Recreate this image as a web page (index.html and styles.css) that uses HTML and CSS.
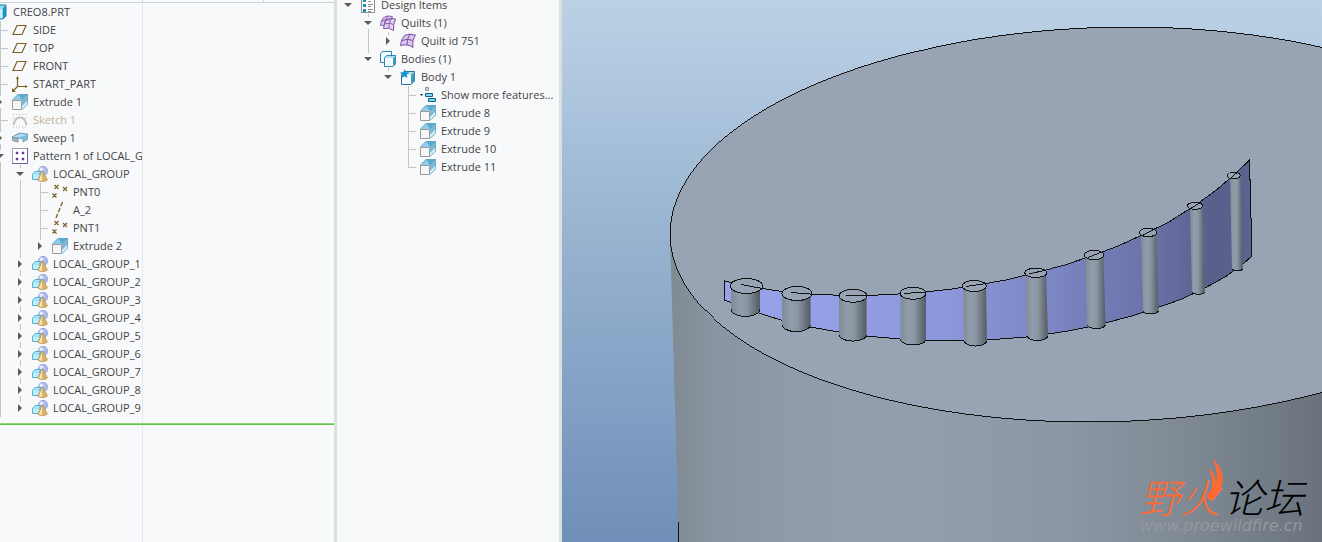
FILE: index.html
```html
<!DOCTYPE html>
<html lang="en">

<head>
    <meta charset="UTF-8">
    <meta name="viewport" content="width=device-width, initial-scale=1.0">
    <title>CREO8.PRT</title>
    <link rel="stylesheet" href="styles.css">
</head>

<body>

    <!-- Icons -->
    <svg class="sprite" aria-hidden="true">
        <symbol id="i-part" viewBox="0 0 16 16">
            <path d="M1 4L4 1H14V12L11 15H1Z" fill="#8fdcf5" stroke="#1f7fae" />
            <path d="M11 4V15L14 12V1Z" fill="#1f8fc0" />
            <path d="M2 5h8v9H2z" fill="#c9f1fc" />
        </symbol>
        <symbol id="i-plane" viewBox="0 0 16 16">
            <path d="M5 3.500H14L10 12.500H1Z" fill="none" stroke="#7d6129" stroke-width="1.2" />
        </symbol>
        <symbol id="i-csys" viewBox="0 0 16 16">
            <path d="M5.500 1V10.500H15M5.500 10.500L1 15" fill="none" stroke="#7d6129" stroke-width="1.2" />
            <path d="M4 3L5.500 0L7 3ZM13 9L16 10.500L13 12ZM0 12V16H4Z" fill="#7d6129" />
        </symbol>
        <symbol id="i-extrude" viewBox="0 0 16 16">
            <path d="M0 6L6 0H16L10 6Z" fill="#8fcde8" />
            <path d="M6 0H16L10 6Z" fill="#58abd3" />
            <path d="M10 6L16 0V10L10 16Z" fill="#7cbad6" />
            <path d="M10 16L16 10V6L10 12Z" fill="#d8f0f8" />
            <path d="M0.500 6L6 0.500H15.500V10L10 15.500M10 6L15.500 0.500" fill="none" stroke="#6aa3bd" stroke-width="0.8" />
            <path d="M0.500 6.500H9.500V15.500H0.500Z" fill="#f7f7f7" stroke="#9b9b9b" />
        </symbol>
        <symbol id="i-sketch" viewBox="0 0 16 16">
            <path d="M1.500 13C3.500 3 12.500 3 14.500 13" fill="none" stroke="#c4c2bd" stroke-width="2" />
            <path d="M1 2.500H16M1 15H16M1 6h2M13 6h2" fill="none" stroke="#b4b4b4" stroke-dasharray="1 2" />
        </symbol>
        <symbol id="i-sweep" viewBox="0 0 16 16">
            <path d="M0 7L7 3L16 4V9L11 12V9L7 8L0 10Z" fill="#79bddb" stroke="#6d9cb0" stroke-width="0.8" />
            <path d="M1 7L8 4L15 5L8 7Z" fill="#b9e0ef" />
            <path d="M0.500 7.500L6 8.500V12L0.500 10.500Z" fill="#a8b9c0" stroke="#8b9599" />
        </symbol>
        <symbol id="i-pattern" viewBox="0 0 16 16">
            <path d="M0.500 0.500H15.500V15.500H0.500Z" fill="#fff" stroke="#a99aba" />
            <path d="M15.500 0V15.500H0" fill="none" stroke="#7a5a9c" />
            <path d="M4 4h2v2H4zM10 4h2v2h-2zM4 10h2v2H4zM10 10h2v2h-2z" fill="#6a3f9a" stroke="#6a3f9a" stroke-width="0.5" />
        </symbol>
        <symbol id="i-group" viewBox="0 0 16 16">
            <circle cx="11" cy="5" r="4.700" fill="#a9b9ee" stroke="#8090cc" stroke-width="0.6" />
            <circle cx="9.500" cy="3.500" r="2" fill="#e6ebff" />
            <path d="M0.500 8.500L3 5.500H9L7 8.500V13.500H0.500Z" fill="#a5e6fa" stroke="#3a9fc8" stroke-width="0.8" />
            <path d="M1 9H7V13H1Z" fill="#bceffd" />
            <path d="M10.500 4.500L15.500 14Q10.500 17.500 5.500 14Z" fill="#d9b266" stroke="#a98848" stroke-width="0.6" />
            <path d="M10 6L7 14Q9 15 10 15Z" fill="#f8e2b4" />
        </symbol>
        <symbol id="i-points" viewBox="0 0 16 16">
            <path d="M2.500 1l4 4m0-4l-4 4M11 3l4 4m0-4l-4 4M0.500 9.500l4 4m0-4l-4 4" fill="none" stroke="#80632a" stroke-width="1.3" />
        </symbol>
        <symbol id="i-axis" viewBox="0 0 16 16">
            <path d="M10.500 0L4 16" fill="none" stroke="#80632a" stroke-width="1.4" stroke-dasharray="4.500 2" />
        </symbol>
        <symbol id="i-design" viewBox="0 0 16 16">
            <path d="M1.500 0.500H14.500V15.500H1.500Z" fill="#fff" stroke="#8c8c8c" />
            <path d="M3 2h3v3H3zM3 7h3v3H3zM3 12h3v3H3z" fill="#1f8fc0" />
            <path d="M8 2.500h5M8 4.500h3M8 7.500h5M8 9.500h3M8 12.500h5M8 14.500h3" stroke="#8c8c8c" />
        </symbol>
        <symbol id="i-quilt" viewBox="0 0 16 16">
            <path d="M4.500 2.500Q9 0 15.500 2Q12 7 13 14.500Q8 10.500 0.500 12.500Q1 6 4.500 2.500Z" fill="#dcc8ee" stroke="#7c4fa3" />
            <path d="M10 1Q6.500 6 7 12M2 7.500Q7 5 13 7.500" fill="none" stroke="#7c4fa3" />
        </symbol>
        <symbol id="i-quilts" viewBox="0 0 16 16">
            <path d="M3.500 2.500Q7 0 12.500 1.500Q9.500 6 10 11.500Q6 9 0.500 10.500Q1 5 3.500 2.500Z" fill="#dcc8ee" stroke="#8e63b3" />
            <path d="M7 4.500Q10.500 2.500 15.500 4Q13 9 13.500 15.500Q9 12 3.500 13.500Q4 7 7 4.500Z" fill="#e3d3f2" stroke="#7c4fa3" />
            <path d="M11.500 3.500Q8.500 8 8.800 13M5 9Q9 7 13.500 9.500M8 1Q5 4 4.500 9M1.500 6Q5 4 10 5" fill="none" stroke="#7c4fa3" stroke-width="0.9" />
        </symbol>
        <symbol id="i-bodies" viewBox="0 0 16 16">
            <path d="M0.500 2.500L3 0.500H11.500V9L9.500 11.500H0.500Z" fill="#f4fcff" stroke="#2c86ad" />
            <path d="M4.500 6.500L7 4.500H15.500V13L13 15.500H4.500Z" fill="#f7fdff" stroke="#2c86ad" />
            <path d="M13 7L15.500 4.500V13L13 15.500Z" fill="#3f9cc2" />
            <path d="M5 6.500L7 5H15L13 7H5Z" fill="#a5e0f5" />
        </symbol>
        <symbol id="i-body" viewBox="0 0 16 16">
            <path d="M1.500 5.500L5 2.500H14.500V12L11 15.500H1.500Z" fill="#f7fdff" stroke="#2c6f93" />
            <path d="M11 5.500L14.500 2.500V12L11 15.500Z" fill="#3f9cc2" />
            <path d="M2 5.500L5 3H14L11 5.500Z" fill="#a5e0f5" />
            <path d="M4.500 0L5.800 3.300L9.300 3.500L6.600 5.700L7.500 9L4.500 7.200L1.500 9L2.400 5.700L0 3.500L3.200 3.300Z" fill="#1590cf" />
        </symbol>
        <symbol id="i-more" viewBox="0 0 16 16">
            <path d="M5.500 0.500h3v3h-3z" fill="#cfcfcf" stroke="#999" />
            <path d="M0 7h3L1.500 9Z" fill="#222" />
            <path d="M5.500 6.500h7v3h-7zM8.500 11.500h7v3h-7z" fill="#7fd6f5" stroke="#0f6288" />
        </symbol>
    </svg>

    <main class="workspace">

        <!-- Model tree -->
        <section class="panel model-panel" aria-label="Model tree">
            <div class="column-heads"><span></span><span></span><span></span></div>
            <div class="name-column">
                <ul class="tree model-tree">
                    <li>
                        <div class="row"><span class="twisty"></span><svg class="icon"><use href="#i-part" /></svg>CREO8.PRT</div>
                        <ul class="trunk">
                            <li class="leaf"><div class="row"><span class="twisty"></span><svg class="icon"><use href="#i-plane" /></svg>SIDE</div></li>
                            <li class="leaf"><div class="row"><span class="twisty"></span><svg class="icon"><use href="#i-plane" /></svg>TOP</div></li>
                            <li class="leaf"><div class="row"><span class="twisty"></span><svg class="icon"><use href="#i-plane" /></svg>FRONT</div></li>
                            <li class="leaf"><div class="row"><span class="twisty"></span><svg class="icon"><use href="#i-csys" /></svg>START_PART</div></li>
                            <li><div class="row"><button class="twisty closed" aria-label="Expand"></button><svg class="icon"><use href="#i-extrude" /></svg>Extrude 1</div></li>
                            <li class="leaf"><div class="row suppressed"><span class="twisty"></span><svg class="icon"><use href="#i-sketch" /></svg>Sketch 1</div></li>
                            <li><div class="row"><button class="twisty closed" aria-label="Expand"></button><svg class="icon"><use href="#i-sweep" /></svg>Sweep 1</div></li>
                            <li>
                                <div class="row"><button class="twisty open" aria-label="Collapse"></button><svg class="icon"><use href="#i-pattern" /></svg>Pattern 1 of LOCAL_G</div>
                                <ul>
                                    <li>
                                        <div class="row"><button class="twisty open" aria-label="Collapse"></button><svg class="icon"><use href="#i-group" /></svg>LOCAL_GROUP</div>
                                        <ul>
                                            <li class="leaf"><div class="row"><span class="twisty"></span><svg class="icon"><use href="#i-points" /></svg>PNT0</div></li>
                                            <li class="leaf"><div class="row"><span class="twisty"></span><svg class="icon"><use href="#i-axis" /></svg>A_2</div></li>
                                            <li class="leaf"><div class="row"><span class="twisty"></span><svg class="icon"><use href="#i-points" /></svg>PNT1</div></li>
                                            <li><div class="row"><button class="twisty closed" aria-label="Expand"></button><svg class="icon"><use href="#i-extrude" /></svg>Extrude 2</div></li>
                                        </ul>
                                    </li>
                                    <li><div class="row"><button class="twisty closed" aria-label="Expand"></button><svg class="icon"><use href="#i-group" /></svg>LOCAL_GROUP_1</div></li>
                                    <li><div class="row"><button class="twisty closed" aria-label="Expand"></button><svg class="icon"><use href="#i-group" /></svg>LOCAL_GROUP_2</div></li>
                                    <li><div class="row"><button class="twisty closed" aria-label="Expand"></button><svg class="icon"><use href="#i-group" /></svg>LOCAL_GROUP_3</div></li>
                                    <li><div class="row"><button class="twisty closed" aria-label="Expand"></button><svg class="icon"><use href="#i-group" /></svg>LOCAL_GROUP_4</div></li>
                                    <li><div class="row"><button class="twisty closed" aria-label="Expand"></button><svg class="icon"><use href="#i-group" /></svg>LOCAL_GROUP_5</div></li>
                                    <li><div class="row"><button class="twisty closed" aria-label="Expand"></button><svg class="icon"><use href="#i-group" /></svg>LOCAL_GROUP_6</div></li>
                                    <li><div class="row"><button class="twisty closed" aria-label="Expand"></button><svg class="icon"><use href="#i-group" /></svg>LOCAL_GROUP_7</div></li>
                                    <li><div class="row"><button class="twisty closed" aria-label="Expand"></button><svg class="icon"><use href="#i-group" /></svg>LOCAL_GROUP_8</div></li>
                                    <li><div class="row"><button class="twisty closed" aria-label="Expand"></button><svg class="icon"><use href="#i-group" /></svg>LOCAL_GROUP_9</div></li>
                                </ul>
                            </li>
                        </ul>
                    </li>
                </ul>
            </div>
            <div class="insert-line"></div>
            <div class="name-column rest"></div>
        </section>

        <!-- Design tree -->
        <section class="panel design-panel" aria-label="Design items">
            <ul class="tree design-tree">
                <li>
                    <div class="row"><button class="twisty open" aria-label="Collapse"></button><svg class="icon"><use href="#i-design" /></svg>Design Items</div>
                    <ul>
                        <li>
                            <div class="row"><button class="twisty open" aria-label="Collapse"></button><svg class="icon"><use href="#i-quilts" /></svg>Quilts (1)</div>
                            <ul>
                                <li><div class="row"><button class="twisty closed" aria-label="Expand"></button><svg class="icon"><use href="#i-quilt" /></svg>Quilt id 751</div></li>
                            </ul>
                        </li>
                        <li>
                            <div class="row"><button class="twisty open" aria-label="Collapse"></button><svg class="icon"><use href="#i-bodies" /></svg>Bodies (1)</div>
                            <ul>
                                <li>
                                    <div class="row"><button class="twisty open" aria-label="Collapse"></button><svg class="icon"><use href="#i-body" /></svg>Body 1</div>
                                    <ul>
                                        <li class="leaf"><div class="row"><span class="twisty"></span><svg class="icon"><use href="#i-more" /></svg>Show more features...</div></li>
                                        <li class="leaf"><div class="row"><span class="twisty"></span><svg class="icon"><use href="#i-extrude" /></svg>Extrude 8</div></li>
                                        <li class="leaf"><div class="row"><span class="twisty"></span><svg class="icon"><use href="#i-extrude" /></svg>Extrude 9</div></li>
                                        <li class="leaf"><div class="row"><span class="twisty"></span><svg class="icon"><use href="#i-extrude" /></svg>Extrude 10</div></li>
                                        <li class="leaf"><div class="row"><span class="twisty"></span><svg class="icon"><use href="#i-extrude" /></svg>Extrude 11</div></li>
                                    </ul>
                                </li>
                            </ul>
                        </li>
                    </ul>
                </li>
            </ul>
        </section>

        <!-- 3D view -->
        <section class="viewport" aria-label="Graphics area">
            <svg class="scene" viewBox="562 0 760 542" preserveAspectRatio="xMinYMin slice">
                <defs>
                    <linearGradient id="side" gradientUnits="userSpaceOnUse" x1="670" y1="0" x2="1322" y2="0">
                        <stop offset="0" stop-color="#7f8a93" />
                        <stop offset="0.060" stop-color="#8894a0" />
                        <stop offset="0.200" stop-color="#909caa" />
                        <stop offset="0.380" stop-color="#929eac" />
                        <stop offset="0.600" stop-color="#8b97a3" />
                        <stop offset="0.800" stop-color="#7e8994" />
                        <stop offset="1" stop-color="#6a737d" />
                    </linearGradient>
                    <linearGradient id="sheet" gradientUnits="userSpaceOnUse" x1="725" y1="0" x2="1252" y2="0">
                        <stop offset="0" stop-color="#98a2ea" />
                        <stop offset="0.230" stop-color="#939ee5" />
                        <stop offset="0.420" stop-color="#8c97da" />
                        <stop offset="0.600" stop-color="#7e88c5" />
                        <stop offset="0.800" stop-color="#6b73a9" />
                        <stop offset="0.930" stop-color="#595f8b" />
                        <stop offset="1" stop-color="#5d638f" />
                    </linearGradient>
                    <linearGradient id="pin">
                        <stop offset="0" stop-color="#7f8a95" />
                        <stop offset="0.300" stop-color="#919dab" />
                        <stop offset="0.550" stop-color="#8a96a2" />
                        <stop offset="0.850" stop-color="#656e78" />
                        <stop offset="1" stop-color="#545c64" />
                    </linearGradient>
                </defs>

                <!-- Base cylinder -->
                <path d="M670 235L679 542H1322V225Z" fill="url(#side)" />
                <ellipse class="face" cx="1109" cy="224.500" rx="439.100" ry="197.200" transform="rotate(-1.550 1109 224.500)" />
                <path class="edge" d="M678.500 522V542" />

                <!-- Swept sheet -->
                <path fill="url(#sheet)" d="M724.500 281L746 285.500L763 288.600L782 291.500L810 294L840 295.300L868 295.500L895 294.200L925 292L950 289.300L974 285.500L1005 280.200L1035 272.800L1065 265L1094 255L1118 246L1140 236L1168 222.500L1195 205.500L1215 191L1234 175L1249.500 160L1252 256L1243 264L1225 277L1205 288L1182 299L1158 307.500L1132 316L1105 323L1088 327L1068 331L1048 334L1026 337L987 340L945 341L926 340.500L900 339L866 336L839 332L810 327L781 320L760 313.500L731 302.500L724.500 300Z" />
                <path class="edge" d="M724.500 300V281L746 285.500L763 288.600L782 291.500L810 294L840 295.300L868 295.500L895 294.200L925 292L950 289.300L974 285.500L1005 280.200L1035 272.800L1065 265L1094 255L1118 246L1140 236L1168 222.500L1195 205.500L1215 191L1234 175L1249.500 160L1252 256L1243 264L1225 277L1205 288L1182 299L1158 307.500L1132 316L1105 323L1088 327L1068 331L1048 334L1026 337L987 340L945 341L926 340.500L900 339L866 336L839 332L810 327L781 320L760 313.500L731 302.500Z" />

                <!-- Pins -->
                <g fill="url(#pin)">
                    <path d="M731 288V309A14.500 7.500 0 0 0 760 309V288Z" />
                    <path d="M782 295V324.500A14 7 0 0 0 810.500 324.500V295Z" />
                    <path d="M839 297V334.500A13.500 6.500 0 0 0 866.500 334.500V297Z" />
                    <path d="M900.500 295V340A13 6 0 0 0 926 340V295Z" />
                    <path d="M963 287L964 340.500A11.500 5.500 0 0 0 987 340.500L986 287Z" />
                    <path d="M1025.500 274L1027 335.500A10.500 5 0 0 0 1048 335.500L1046 274Z" />
                    <path d="M1085.500 257L1087 325A9.500 4.500 0 0 0 1105.500 325L1103.500 257Z" />
                    <path d="M1141 234L1143 311A8 4 0 0 0 1158.500 311L1156.500 234Z" />
                    <path d="M1190 207L1192 292A7 3.500 0 0 0 1205 292L1202.500 207Z" />
                    <path d="M1230 177L1232 269A6 3 0 0 0 1243 269L1240.500 177Z" />
                </g>
                <g class="edge">
                    <path d="M731 309A14.500 7.500 0 0 0 760 309" />
                    <path d="M782 324.500A14 7 0 0 0 810.500 324.500" />
                    <path d="M839 334.500A13.500 6.500 0 0 0 866.500 334.500" />
                    <path d="M900.500 340A13 6 0 0 0 926 340" />
                    <path d="M964 340.500A11.500 5.500 0 0 0 987 340.500" />
                    <path d="M1027 335.500A10.500 5 0 0 0 1048 335.500" />
                    <path d="M1087 325A9.500 4.500 0 0 0 1105.500 325" />
                    <path d="M1143 311A8 4 0 0 0 1158.500 311" />
                    <path d="M1192 292A7 3.500 0 0 0 1205 292" />
                    <path d="M1232 269A6 3 0 0 0 1243 269" />
                </g>
                <g class="face">
                    <ellipse cx="746.500" cy="286" rx="16.300" ry="7.500" />
                    <ellipse cx="797" cy="293.500" rx="15" ry="7" />
                    <ellipse cx="853" cy="295.800" rx="14" ry="6.500" />
                    <ellipse cx="913" cy="293.300" rx="13" ry="6" />
                    <ellipse cx="974.300" cy="286" rx="12" ry="5.500" />
                    <ellipse cx="1035.700" cy="272.800" rx="11" ry="4.700" />
                    <ellipse cx="1094" cy="255" rx="9.700" ry="4.700" />
                    <ellipse cx="1148" cy="232.500" rx="8.700" ry="4.200" />
                    <ellipse cx="1195" cy="205.800" rx="7.700" ry="3.500" />
                    <ellipse cx="1233.800" cy="175.500" rx="6.500" ry="3.200" />
                </g>
                <path class="edge" d="M741 284.500L763 288.600M791 292.500L812 294.200M846 295.500H867M904 293.500L926 292M966 286.500L986 283.500M1029 274L1046 270M1088 257.500L1103 251.500M1142 235.500L1156 228.500M1190 209L1201 202M1231 178L1238 171.500" />
            </svg>

            <!-- Forum mark -->
            <div class="watermark">
                <div class="brand" lang="zh-CN"><span class="fire">野火</span><span>论坛</span></div>
                <div class="site">www.proewildfire.cn</div>
                <svg class="flame" viewBox="0 0 20 44" aria-hidden="true">
                    <path d="M7 0C17 9 20 20 16 30C13 37 10 38 8 42C5 44 1 40 2 36C8 33 10 24 3 9C9 14 11 20 11 25C13 18 12 9 7 0Z" fill="#ff6a33" />
                </svg>
            </div>
        </section>

    </main>

</body>

</html>
```

FILE: styles.css
```css
/* General */
* {
    box-sizing: border-box;
}

body {
    margin: 0;
    font-family: "Open Sans", "Noto Sans", sans-serif;
    font-size: 11px;
    color: #444;
    background-color: #f8f9fb;
}

.sprite {
    display: none;
}

.workspace {
    display: flex;
    height: 100vh;
    overflow: hidden;
}

/* Panels */
.panel {
    flex: none;
    border-right: 3px solid #d9e0e0;
    background-color: #f8f9fb;
    overflow: hidden;
}

.model-panel {
    width: 337px;
    display: flex;
    flex-direction: column;
}

.design-panel {
    width: 225px;
}

.column-heads {
    display: grid;
    grid-template-columns: 143px 121px 1fr;
    height: 3px;
    border-bottom: 1px solid #d0d4d6;
}

.column-heads span {
    border-right: 1px solid #d0d4d6;
}

.column-heads span:last-child {
    border-right: none;
}

.name-column {
    width: 143px;
    padding-bottom: 6px;
    border-right: 1px solid #e6e9ec;
    overflow: hidden;
}

.rest {
    flex: 1;
}

.insert-line {
    height: 2px;
    background-color: #63c544;
    border-top: 1px solid #8fd67a;
}

/* Trees */
.tree,
.tree ul {
    list-style: none;
    margin: 0;
    padding: 0;
}

.tree ul {
    padding-left: 20px;
}

.model-tree {
    margin-left: -28px;
}

.design-tree {
    margin: -4px 0 0 3px;
}

/* The branch line runs behind the arrows */
.tree ul > li {
    background: linear-gradient(#c3c5c8, #c3c5c8) 8px 0 / 1px 100% no-repeat;
}

.tree ul > li:last-child {
    background-size: 1px 9px;
}

.tree .trunk > li:last-child {
    background-size: 1px 100%;
}

.row {
    display: flex;
    align-items: center;
    height: 18px;
    line-height: 16px;
    white-space: nowrap;
}

.suppressed {
    color: #bfb498;
}

.icon {
    flex: none;
    width: 16px;
    height: 16px;
    margin: 0 5px 0 4px;
}

.twisty {
    flex: none;
    display: flex;
    align-items: center;
    justify-content: center;
    width: 16px;
    height: 12px;
    padding: 0;
    border: none;
    background: none;
}

button.twisty {
    background-color: #f8f9fb;
    cursor: pointer;
}

.leaf .twisty {
    background: linear-gradient(#c3c5c8, #c3c5c8) 100% 50% / 8px 1px no-repeat;
}

.twisty.open::before {
    content: "";
    border: 4px solid transparent;
    border-top-color: #5c5c5c;
    border-bottom: none;
}

.twisty.closed::before {
    content: "";
    border: 4px solid transparent;
    border-left-color: #5c5c5c;
    border-right: none;
}

/* 3D view */
.viewport {
    flex: 1;
    min-width: 0;
    position: relative;
    background: linear-gradient(#bbd2e5, #aec5de 18%, #a2bdd6 30%, #94afcd 50%, #829fc4 75%, #6f8fb8);
}

.scene {
    display: block;
    width: 100%;
    height: 100%;
}

.face {
    fill: #98a3b3;
    stroke: #111;
    shape-rendering: crispEdges;
}

.edge {
    fill: none;
    stroke: #111;
    shape-rendering: crispEdges;
}

.watermark {
    position: absolute;
    right: 18px;
    bottom: 6px;
    font-style: italic;
    color: #000;
}

.brand {
    display: flex;
    gap: 4px;
    font-family: "Noto Sans CJK SC", sans-serif;
    font-size: 40px;
    font-weight: 300;
    line-height: 40px;
}

.fire {
    color: #ff6a33;
}

.site {
    font-family: "DejaVu Sans", sans-serif;
    font-size: 16px;
    line-height: 20px;
    color: #96989b;
}

.flame {
    position: absolute;
    left: 65px;
    top: -18px;
    width: 20px;
    height: 44px;
}
```
